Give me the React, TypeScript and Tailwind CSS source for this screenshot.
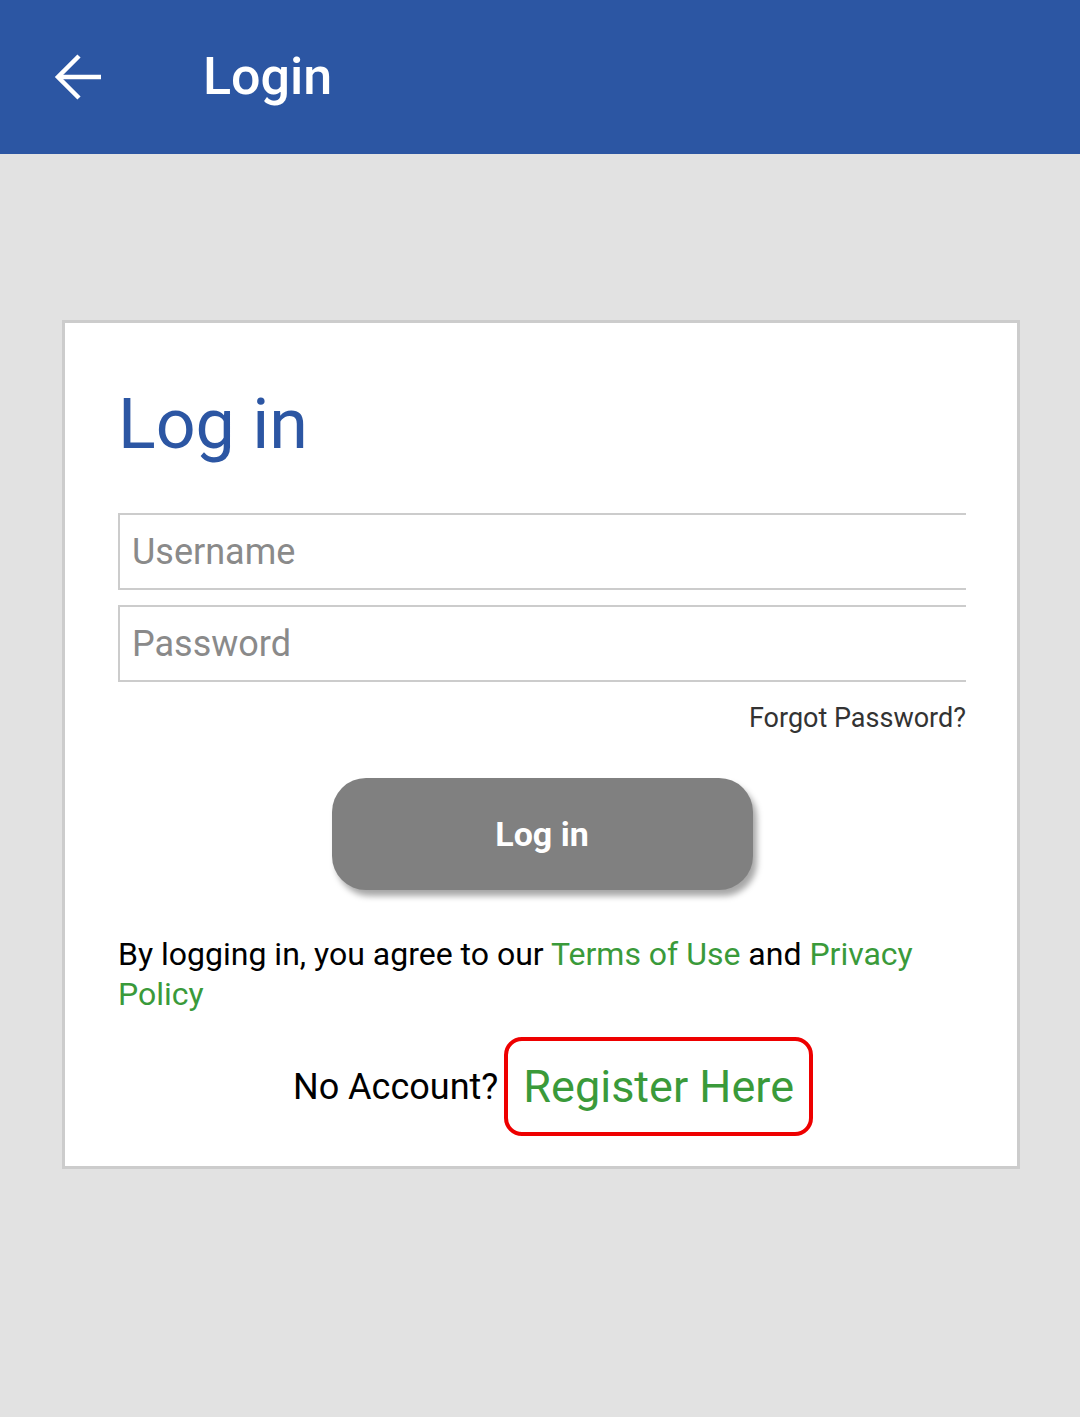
import React from "react";

export default function App() {
  return (
    <div className="min-h-[1417px] w-[1080px] bg-[#e2e2e2] font-['Roboto',sans-serif]">
      {/* Top bar */}
      <header className="h-[154px] bg-[#2c56a3] flex items-center">
        <div className="w-[203px] pl-[54px] flex items-center">
          <svg width="48" height="48" viewBox="0 0 48 48" fill="none" stroke="white" strokeWidth="4.5" strokeLinecap="butt">
            <path d="M4 24H47" />
            <path d="M25 3L4 24l21 21" />
          </svg>
        </div>
        <h1 className="text-[52px] font-medium text-white leading-none">Login</h1>
      </header>

      <main className="pt-[166px] pl-[62px] pr-[60px]">
        <div className="bg-white border-[3px] border-[#cccccc] pt-[66px] pb-[30px] pl-[53px] pr-[51px]">
          <h2 className="text-[70px] leading-none text-[#2c56a3]">Log in</h2>

          <div className="mt-[54px] flex flex-col gap-[15px]">
            <div className="h-[77px] border-y-2 border-l-2 border-[#cccccc] flex items-center pl-[12px]">
              <span className="text-[36px] text-[#8a8a8a]">Username</span>
            </div>
            <div className="h-[77px] border-y-2 border-l-2 border-[#cccccc] flex items-center pl-[12px]">
              <span className="text-[36px] text-[#8a8a8a]">Password</span>
            </div>
          </div>

          <div className="mt-[23px] text-right text-[27px] text-[#333333] leading-none">Forgot Password?</div>

          <div className="mt-[46px] flex justify-center">
            <button className="w-[421px] h-[112px] rounded-[34px] bg-[#808080] text-white font-bold text-[34px] shadow-[4px_6px_6px_rgba(0,0,0,0.35)]">
              Log in
            </button>
          </div>

          <p className="mt-[44px] text-[32px] leading-[40px] text-black">
            By logging in, you agree to our <span className="text-[#3a9a3a]">Terms of Use</span> and{" "}
            <span className="text-[#3a9a3a]">Privacy Policy</span>
          </p>

          <div className="mt-[23px] flex justify-center items-center pl-[22px]">
            <span className="text-[36px] text-black">No Account?</span>
            <span className="ml-[6px] border-[4px] border-[#ee0000] rounded-[18px] px-[15px] h-[99px] flex items-center text-[45px] text-[#3a9a3a]">
              Register Here
            </span>
          </div>
        </div>
      </main>
    </div>
  );
}
